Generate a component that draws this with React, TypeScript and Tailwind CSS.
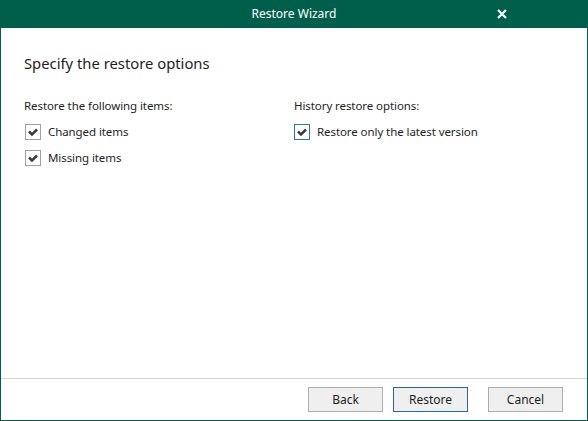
import React, { useState } from 'react';

const font = { fontFamily: '"Noto Sans", "Open Sans", sans-serif' };

const Check: React.FC<{ label: string; checked: boolean; focused?: boolean; onToggle: () => void }> = ({ label, checked, focused, onToggle }) => (
  <label className="flex items-center h-[16px] gap-[7px] cursor-default select-none" onClick={onToggle}>
    <span className={`w-[16px] h-[16px] flex items-center justify-center bg-white border ${focused ? 'border-[#2a74b8]' : 'border-[#a0a0a0]'}`}>
      {checked && (
        <svg width="12" height="12" viewBox="0 0 12 12">
          <path d="M2 5.5 L5 8.5 L10 3.5" fill="none" stroke="#3c3c3c" strokeWidth="2.5" />
        </svg>
      )}
    </span>
    <span className="text-[11.5px] tracking-[-0.08px] text-[#1e1e1e]">{label}</span>
  </label>
);

const App: React.FC = () => {
  const [changed, setChanged] = useState(true);
  const [missing, setMissing] = useState(true);
  const [latest, setLatest] = useState(true);

  return (
    <div className="w-[588px] h-[421px] flex flex-col bg-white" style={font}>
      {/* Title bar */}
      <header className="h-[28px] bg-[#005f4b] flex items-center justify-center relative shrink-0">
        <span className="text-white text-[12px]">Restore Wizard</span>
        <svg className="absolute left-[497px] top-[9px]" width="10" height="10" viewBox="0 0 10 10">
          <path d="M1 1 L9 9 M9 1 L1 9" stroke="#ffffff" strokeWidth="2.2" />
        </svg>
      </header>

      <div className="flex-1 flex flex-col border-x border-b border-[#005f4b]">
        <div className="flex-1 px-[23px] pt-[25px]">
          <h1 className="text-[14.8px] text-[#1e1e1e] leading-[20px]">Specify the restore options</h1>

          <div className="flex mt-[25px]">
            <div className="w-[270px] flex flex-col">
              <p className="text-[11.5px] tracking-[-0.08px] text-[#1e1e1e] leading-[16px]">Restore the following items:</p>
              <div className="flex flex-col gap-[10px] mt-[10px] pl-[1px]">
                <Check label="Changed items" checked={changed} onToggle={() => setChanged(!changed)} />
                <Check label="Missing items" checked={missing} onToggle={() => setMissing(!missing)} />
              </div>
            </div>
            <div className="flex flex-col">
              <p className="text-[11.5px] tracking-[-0.08px] text-[#1e1e1e] leading-[16px]">History restore options:</p>
              <div className="flex flex-col mt-[10px]">
                <Check label="Restore only the latest version" checked={latest} focused onToggle={() => setLatest(!latest)} />
              </div>
            </div>
          </div>
        </div>

        <footer className="h-[42px] border-t border-[#d4d4d4] flex items-start justify-end pt-[8px] pr-[24px]">
          <button className="w-[75px] h-[25px] bg-[#efefef] border border-[#adadad] text-[12px] text-[#1e1e1e]">Back</button>
          <button className="w-[75px] h-[25px] ml-[10px] bg-[#efefef] border border-[#2369a7] text-[12px] text-[#1e1e1e]">Restore</button>
          <button className="w-[75px] h-[25px] ml-[20px] bg-[#efefef] border border-[#adadad] text-[12px] text-[#1e1e1e]">Cancel</button>
        </footer>
      </div>
    </div>
  );
};

export default App;
